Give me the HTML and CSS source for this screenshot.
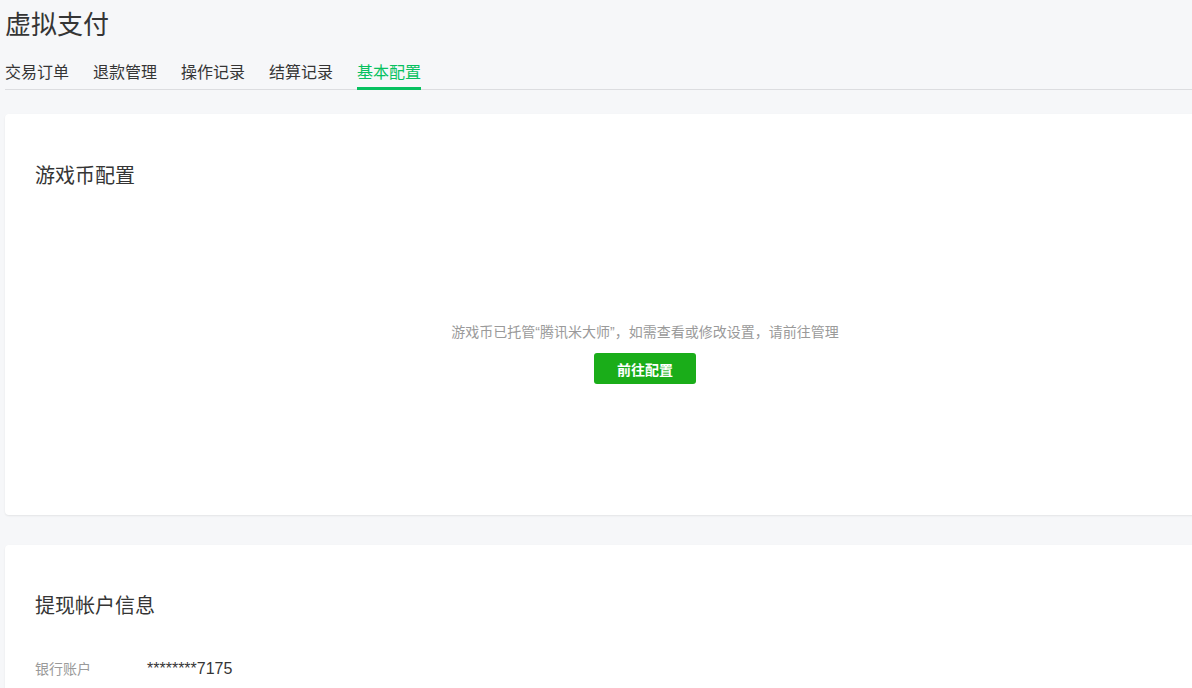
FILE: index.html
```html
<!DOCTYPE html>
<html lang="zh-CN">
<head>
<meta charset="utf-8">
<title>虚拟支付</title>
<link rel="stylesheet" href="styles.css">
</head>
<body>
<div class="page">
  <h1 class="title">虚拟支付</h1>
  <nav class="tabs">
    <a class="tab">交易订单</a>
    <a class="tab">退款管理</a>
    <a class="tab">操作记录</a>
    <a class="tab">结算记录</a>
    <a class="tab active">基本配置</a>
  </nav>
  <section class="card card-coin">
    <h2 class="card-title">游戏币配置</h2>
    <div class="coin-body">
      <p class="coin-tip">游戏币已托管“腾讯米大师”，如需查看或修改设置，请前往管理</p>
      <button class="btn-primary">前往配置</button>
    </div>
  </section>
  <section class="card card-account">
    <h2 class="card-title">提现帐户信息</h2>
    <div class="info-row">
      <span class="info-label">银行账户</span>
      <span class="info-value">********7175</span>
    </div>
  </section>
</div>
</body>
</html>
```

FILE: styles.css
```css
html, body {
  margin: 0;
  padding: 0;
  overflow: hidden;
  background: #f6f7f9;
}
body {
  font-family: "Liberation Sans", "Noto Sans CJK SC", sans-serif;
  color: #353535;
}
.page {
  width: 1280px;
  padding-left: 5px;
}
.title {
  margin: 0;
  padding-top: 7px;
  font-size: 26px;
  font-weight: normal;
  line-height: 36px;
  color: #353535;
}
.tabs {
  display: flex;
  gap: 24px;
  margin-top: 18px;
  border-bottom: 1px solid #dcdde0;
}
.tab {
  font-size: 16px;
  line-height: 24px;
  padding-bottom: 2px;
  color: #353535;
  border-bottom: 3px solid transparent;
  margin-bottom: -1px;
}
.tab.active {
  color: #07c160;
  border-bottom-color: #07c160;
}
.card {
  background: #fff;
  border-radius: 4px;
  box-shadow: 0 1px 2px rgba(0, 0, 0, 0.08);
  padding: 0 30px;
}
.card-coin {
  margin-top: 24px;
  height: 401px;
  padding-top: 48px;
  box-sizing: border-box;
}
.card-title {
  margin: 0;
  font-size: 20px;
  font-weight: normal;
  line-height: 28px;
  color: #353535;
}
.coin-body {
  display: flex;
  flex-direction: column;
  align-items: center;
  padding-top: 132px;
}
.coin-tip {
  margin: 0;
  font-size: 14px;
  line-height: 20px;
  color: #9a9a9a;
}
.btn-primary {
  margin-top: 11px;
  width: 102px;
  height: 31px;
  border: 0;
  border-radius: 3px;
  background: #1aad19;
  color: #fff;
  font-family: inherit;
  font-size: 14px;
  font-weight: bold;
}
.card-account {
  margin-top: 30px;
  padding-top: 47px;
  padding-bottom: 40px;
}
.info-row {
  display: flex;
  align-items: baseline;
  margin-top: 38px;
}
.info-label {
  width: 112px;
  font-size: 14px;
  color: #9a9a9a;
}
.info-value {
  font-size: 16px;
  color: #353535;
}
```
